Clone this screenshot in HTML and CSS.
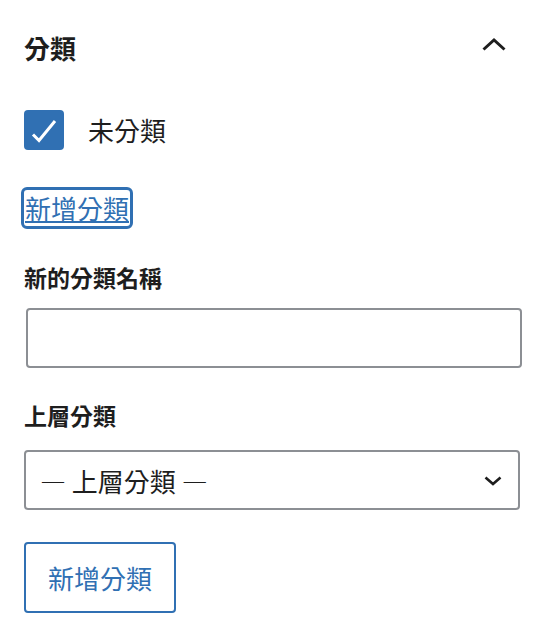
FILE: index.html
```html
<!DOCTYPE html>
<html lang="zh-Hant">
<head>
<meta charset="utf-8">
<link rel="stylesheet" href="styles.css">
</head>
<body>
<div class="panel">
  <div class="panel-header">
    <h2 class="panel-title">分類</h2>
    <svg class="chevron-up" width="26" height="16" viewBox="0 0 26 16" aria-hidden="true"><path d="M2.5 12.5 L13 3 L23.5 12.5" fill="none" stroke="#1e1e1e" stroke-width="3"/></svg>
  </div>
  <label class="check-row">
    <span class="checkbox"><svg width="40" height="40" viewBox="0 0 40 40" aria-hidden="true"><path d="M9 24.5 L15 30.5 L31 11" fill="none" stroke="#fff" stroke-width="3"/></svg></span>
    <span class="check-label">未分類</span>
  </label>
  <div class="link-row"><a class="add-link" href="#">新增分類</a></div>
  <label class="field-label">新的分類名稱</label>
  <input class="text-input" type="text">
  <label class="field-label second">上層分類</label>
  <div class="select-wrap">
    <select class="select"><option>— 上層分類 —</option></select>
    <svg class="chevron-down" width="18" height="10" viewBox="0 0 18 10" aria-hidden="true"><path d="M1.5 1.5 L9 8 L16.5 1.5" fill="none" stroke="#1e1e1e" stroke-width="2.6"/></svg>
  </div>
  <button class="add-button" type="button">新增分類</button>
</div>
</body>
</html>
```
FILE: styles.css
```css
* { box-sizing: border-box; }
html, body { margin: 0; padding: 0; background: #fff; }
body {
  font-family: "Noto Sans CJK TC", "Noto Sans", sans-serif;
  color: #1e1e1e;
}
.panel {
  padding: 30px 20px 0 24px;
  display: flex;
  flex-direction: column;
  align-items: flex-start;
}
.panel-header {
  width: 100%;
  height: 36px;
  display: flex;
  align-items: center;
  justify-content: space-between;
}
.panel-title {
  margin: 0;
  font-size: 26px;
  line-height: 36px;
  font-weight: 600;
}
.chevron-up { margin-right: 13px; margin-top: -6px; }
.check-row {
  margin-top: 44px;
  display: flex;
  align-items: center;
  gap: 24px;
  height: 40px;
}
.checkbox {
  width: 40px;
  height: 40px;
  border-radius: 4px;
  background: #3070b3;
  display: block;
}
.checkbox svg { display: block; }
.check-label {
  font-size: 26px;
  line-height: 40px;
}
.link-row { margin-top: 37px; margin-left: -3px; }
.add-link {
  display: inline-block;
  font-size: 26px;
  line-height: 36px;
  color: #3070b3;
  text-decoration: underline;
  text-underline-offset: 2px;
  text-decoration-thickness: 2px;
  border: 3px solid #3070b3;
  border-radius: 6px;
  padding: 0 1px 0 1px;
}
.field-label {
  margin-top: 32px;
  font-size: 23px;
  line-height: 32px;
  font-weight: 600;
}
.field-label.second { margin-top: 31px; }
.text-input {
  margin-top: 15px;
  margin-left: 2px;
  width: 496px;
  height: 60px;
  border: 2px solid #8c8f94;
  border-radius: 4px;
  font: inherit;
  background: #fff;
}
.select-wrap {
  margin-top: 19px;
  position: relative;
  width: 496px;
  height: 60px;
}
.select {
  appearance: none;
  -webkit-appearance: none;
  width: 100%;
  height: 100%;
  border: 2px solid #8c8f94;
  border-radius: 4px;
  background: #fff;
  color: #1e1e1e;
  font-family: "Noto Sans CJK TC", "Noto Sans", sans-serif;
  font-size: 26px;
  padding: 0 50px 0 14px;
}
.chevron-down {
  position: absolute;
  right: 18px;
  top: 26px;
}
.add-button {
  margin-top: 32px;
  width: 152px;
  height: 71px;
  border: 2px solid #3070b3;
  border-radius: 4px;
  background: #fff;
  color: #3070b3;
  font-family: "Noto Sans CJK TC", "Noto Sans", sans-serif;
  font-size: 26px;
  padding: 0;
}
```
